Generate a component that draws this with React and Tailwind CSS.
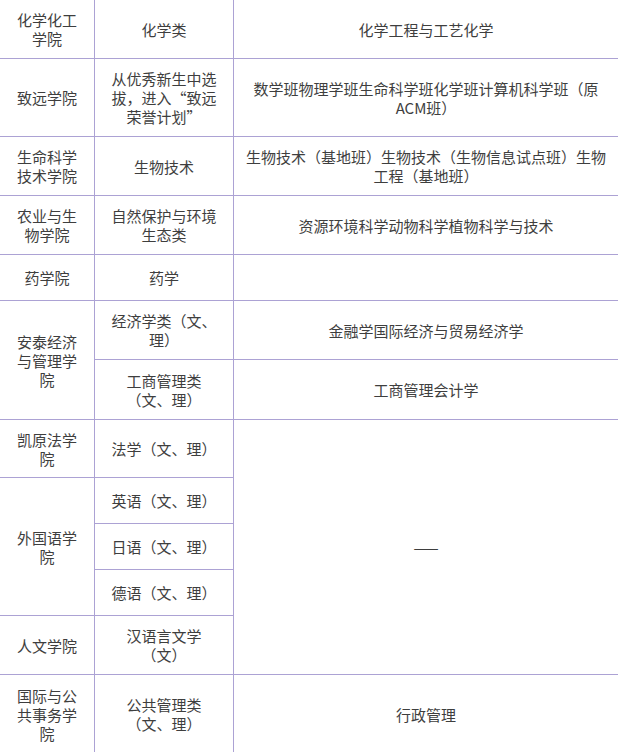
import React from "react";

const cell =
  "bg-white flex items-center justify-center text-center px-3 leading-[19px]";

const wide = "bg-white flex items-center justify-center text-center px-2 leading-[19px]";

export default function App() {
  return (
    <div
      className="w-[618px] h-[752px] overflow-hidden bg-white text-[15px] text-[#3e3e3e] [text-spacing-trim:space-all] [font-feature-settings:'halt'_0,'chws'_0]"
      style={{ fontFamily: "'Microsoft YaHei', 'Noto Sans CJK SC', 'Noto Sans', sans-serif" }}
    >
      <div className="grid grid-cols-[94px_138px_1fr] grid-rows-[58px_77px_58px_58px_45px_58px_59px_57px_45px_45px_45px_58px_78px] gap-px bg-[#aca2d4]">
        {/* 化学化工 */}
        <div className={cell}>化学化工学院</div>
        <div className={cell}>化学类</div>
        <div className={wide}>化学工程与工艺化学</div>

        {/* 致远 */}
        <div className={cell}>致远学院</div>
        <div className={cell}>从优秀新生中选拔，进入“致远荣誉计划”</div>
        <div className={wide}>数学班物理学班生命科学班化学班计算机科学班（原ACM班）</div>

        {/* 生命 */}
        <div className={cell}>生命科学技术学院</div>
        <div className={cell}>生物技术</div>
        <div className={wide}>生物技术（基地班）生物技术（生物信息试点班）生物工程（基地班）</div>

        {/* 农业 */}
        <div className={cell}>农业与生物学院</div>
        <div className={cell}>自然保护与环境生态类</div>
        <div className={wide}>资源环境科学动物科学植物科学与技术</div>

        {/* 药学 */}
        <div className={cell}>药学院</div>
        <div className={cell}>药学</div>
        <div className={wide}></div>

        {/* 安泰 */}
        <div className={`${cell} row-span-2`}>安泰经济与管理学院</div>
        <div className={cell}>经济学类（文、理）</div>
        <div className={wide}>金融学国际经济与贸易经济学</div>
        <div className={cell}>工商管理类（文、理）</div>
        <div className={wide}>工商管理会计学</div>

        {/* 凯原 */}
        <div className={cell}>凯原法学院</div>
        <div className={cell}>法学（文、理）</div>
        <div className={`${wide} row-span-5`}>
          <span className="tracking-[3px] pl-[3px]">——</span>
        </div>

        {/* 外国语 */}
        <div className={`${cell} row-span-3`}>外国语学院</div>
        <div className={cell}>英语（文、理）</div>
        <div className={cell}>日语（文、理）</div>
        <div className={cell}>德语（文、理）</div>

        {/* 人文 */}
        <div className={cell}>人文学院</div>
        <div className={cell}>汉语言文学（文）</div>

        {/* 国务 */}
        <div className={cell}>国际与公共事务学院</div>
        <div className={cell}>公共管理类（文、理）</div>
        <div className={wide}>行政管理</div>
      </div>
    </div>
  );
}
